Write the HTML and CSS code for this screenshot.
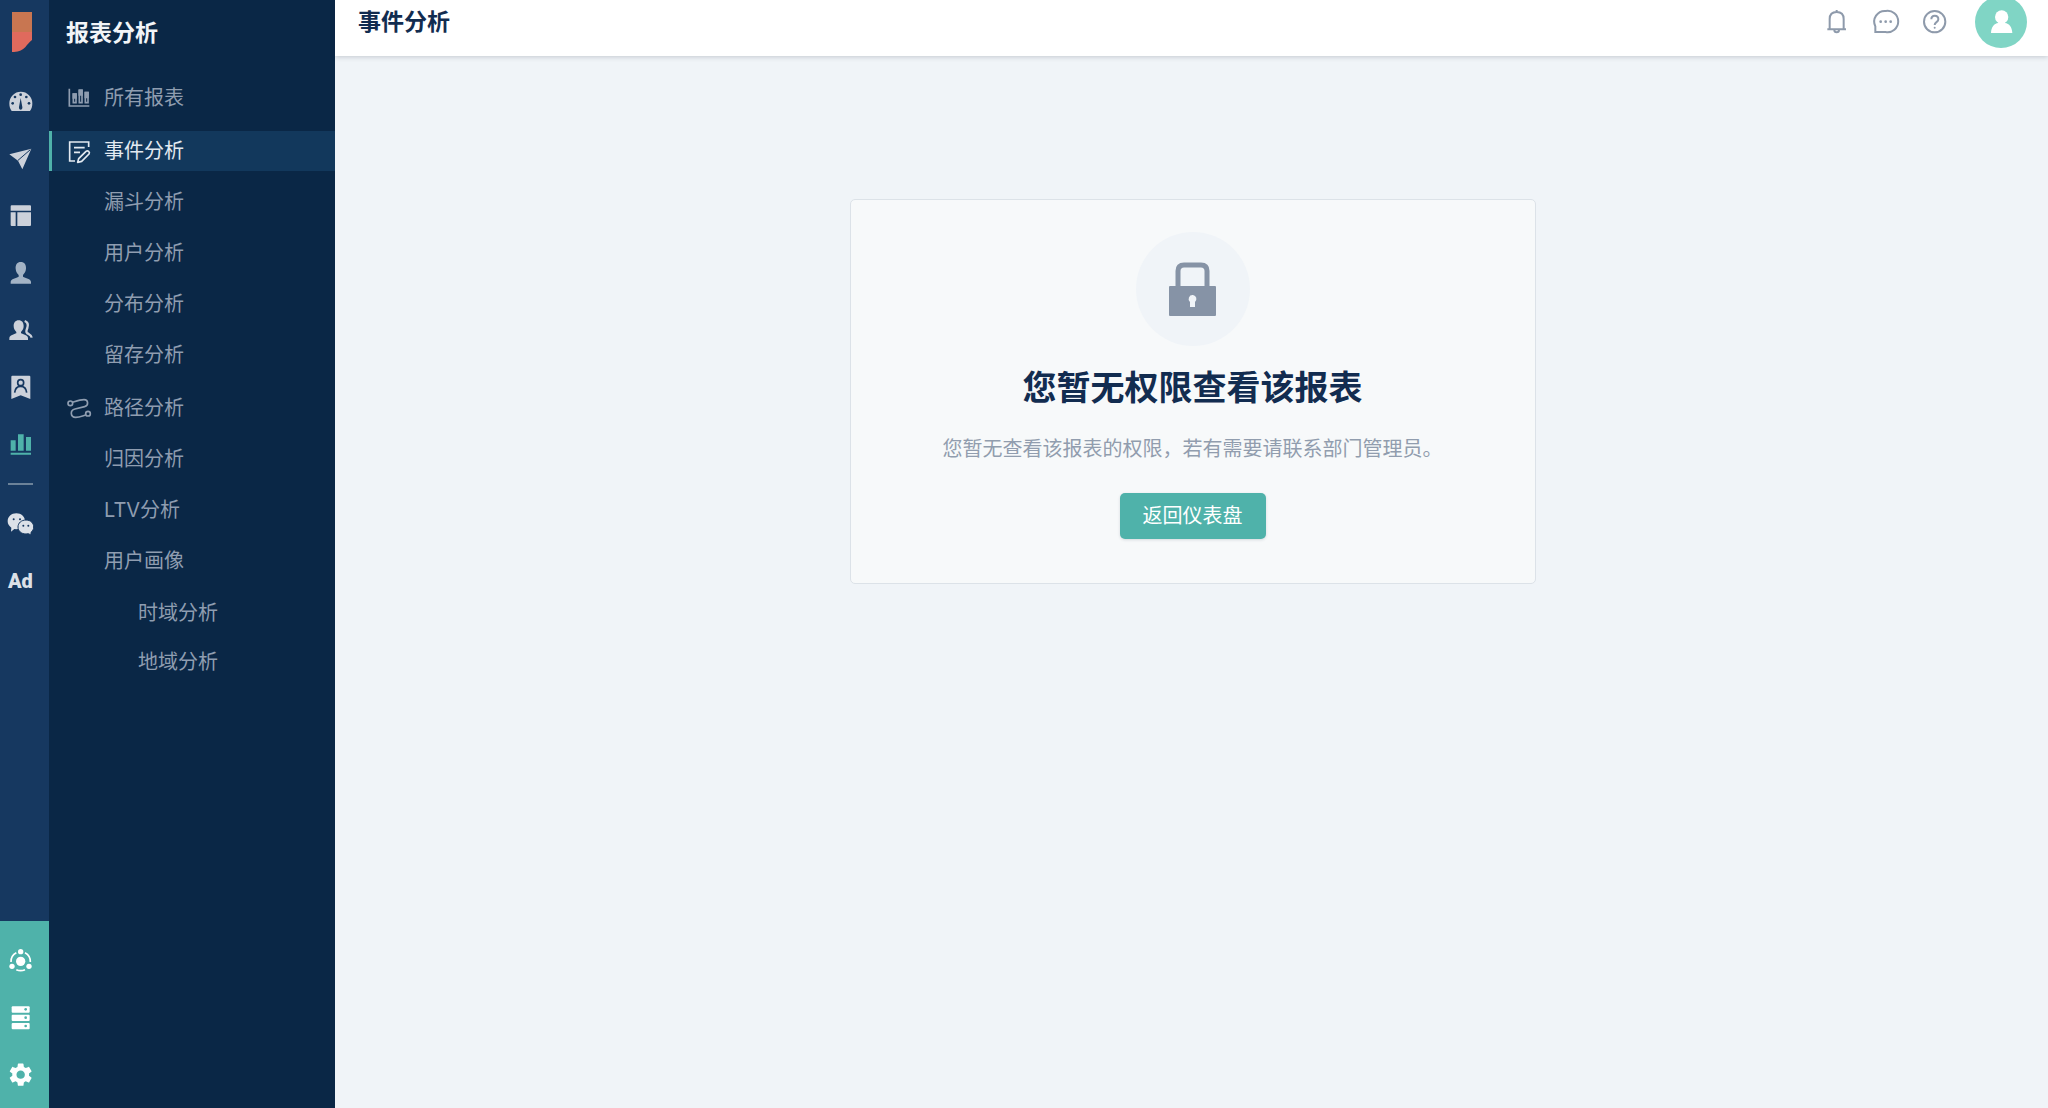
FILE: index.html
```html
<!DOCTYPE html>
<html lang="zh-CN">
<head>
<meta charset="utf-8">
<meta name="viewport" content="width=device-width, initial-scale=1">
<title>事件分析</title>
<link rel="stylesheet" href="styles.css">
</head>
<body>
<div class="app">
  <div class="rail">
    <a class="logo" href="#" aria-label="首页">
      <svg viewBox="0 0 20 40"><path fill="#c87651" d="M0 0h20v21H0z"/><path fill="#e06a5d" d="M0 20h20v8C15 31 13 40 2 40H0z"/></svg>
    </a>
    <nav class="rail-group" aria-label="主导航">
      <a class="rail-link" href="#" aria-label="仪表盘">
        <svg class="icon" viewBox="0 0 75 75"><path fill="currentColor" d="M11 66C6 60 4 52 4 43a34.500 34.500 0 0 1 69 0c0 9-2 17-7 23z"/><g class="cut"><circle cx="14" cy="43" r="4"/><circle cx="21" cy="24" r="4"/><circle cx="38" cy="17" r="4"/><circle cx="55" cy="24" r="4"/><circle cx="63" cy="43" r="4"/><path d="M38 27l5 27c1 5-2 8-5 8s-6-3-5-8z"/></g></svg>
      </a>
      <a class="rail-link" href="#" aria-label="推送">
        <svg class="icon" viewBox="0 0 75 75"><path fill="currentColor" d="M4 25 70 8 43 70 30 44z"/><path class="cut-line" stroke-width="3" d="M67 11 30 43"/></svg>
      </a>
      <a class="rail-link" href="#" aria-label="页面">
        <svg class="icon" viewBox="0 0 75 75" fill="currentColor"><path d="M11 7h55q3 0 3 3v13H8V10q0-3 3-3zM8 28h15v41H11q-3 0-3-3zM28 28h41v38q0 3-3 3H28z"/></svg>
      </a>
      <a class="rail-link rail-link-muted" href="#" aria-label="用户">
        <svg class="icon" viewBox="0 0 75 75" fill="currentColor"><path d="M38 6c11 0 17 8 16 20-1 10-5 14-9 19v5c7 4 24 6 24 16v5H8v-5c0-10 17-12 24-16v-5c-5-5-8-9-9-19C22 14 28 6 38 6z"/></svg>
      </a>
      <a class="rail-link" href="#" aria-label="用户群">
        <svg class="icon" viewBox="0 0 75 75"><path fill="currentColor" d="M32 10c10 0 15 7 15 17 0 9-4 13-8 18v4c6 3 21 5 21 15v5H4v-5c0-10 15-12 21-15v-4c-4-5-8-9-8-18 0-10 5-17 15-17z"/><path fill="none" stroke="currentColor" stroke-width="7" d="M50 12c9 3 11 12 8 21-3 7-5 11-1 15 5 4 13 5 14 14"/></svg>
      </a>
      <a class="rail-link" href="#" aria-label="标签">
        <svg class="icon" viewBox="0 0 75 75"><path fill="currentColor" d="M13 5h51q3 0 3 3v67L38 64 10 75V8q0-3 3-3z"/><circle class="cut-line" stroke-width="5" cx="38" cy="26" r="9"/><path class="cut-line" stroke-width="5" d="M20 56c1-12 8-19 18-19s17 7 18 19"/></svg>
      </a>
      <a class="rail-link rail-link-active" href="#" aria-label="报表分析" aria-current="page">
        <svg class="icon" viewBox="0 0 75 75" fill="currentColor"><path d="M8 28h15v31H8zM30 10h17v49H30zM54 18h15v41H54zM8 65h61v6H8z"/></svg>
      </a>
    </nav>
    <hr class="rail-divider">
    <nav class="rail-group" aria-label="渠道">
      <a class="rail-link rail-link-bright" href="#" aria-label="微信">
        <svg class="icon" viewBox="0 0 75 75"><path fill="currentColor" d="M25 4c15 0 26 10 26 24S40 52 25 52l-6-1-10 8 1-12C3 42-1 36-1 28-1 14 10 4 25 4z"/><path fill="currentColor" stroke="#163860" stroke-width="3" d="M54 24c14 0 23 9 23 21 0 7-3 12-8 16v8l-8-4-7 1c-14 0-24-9-24-21s10-21 24-21z"/><g class="cut"><circle cx="17" cy="22" r="3"/><circle cx="36" cy="22" r="3"/><circle cx="46" cy="41" r="3"/><circle cx="61" cy="41" r="3"/></g></svg>
      </a>
      <a class="rail-link rail-link-bright rail-ad" href="#">Ad</a>
    </nav>
    <nav class="rail-group rail-bottom" aria-label="系统">
      <a class="rail-link" href="#" aria-label="关联">
        <svg class="icon" viewBox="0 0 75 75" fill="currentColor"><circle cx="38" cy="37" r="14"/><circle cx="38" cy="8" r="8"/><circle cx="12" cy="52" r="8"/><circle cx="63" cy="52" r="8"/><path fill="none" stroke="currentColor" stroke-width="5" d="M9 39a30 30 0 0 1 16-28M51 11a30 30 0 0 1 16 28M25 62a30 30 0 0 0 26 0"/></svg>
      </a>
      <a class="rail-link" href="#" aria-label="数据">
        <svg class="icon" viewBox="0 0 75 75"><g fill="currentColor"><rect x="11" y="1" width="54" height="19" rx="3"/><rect x="11" y="26" width="54" height="19" rx="3"/><rect x="11" y="51" width="54" height="19" rx="3"/></g><g fill="#4fb2aa"><circle cx="53" cy="10" r="4"/><circle cx="53" cy="35" r="4"/><circle cx="53" cy="60" r="4"/></g></svg>
      </a>
      <a class="rail-link" href="#" aria-label="设置">
        <svg class="icon" viewBox="0 0 75 75" fill="currentColor"><path transform="translate(-4 -7) scale(3.5)" d="M19.140 12.940c.04-.3.06-.61.06-.94 0-.32-.02-.64-.07-.94l2.030-1.580c.18-.14.23-.41.12-.61l-1.920-3.320c-.12-.22-.37-.29-.59-.22l-2.390.96c-.5-.38-1.030-.7-1.620-.94l-.36-2.540c-.04-.24-.24-.41-.48-.41h-3.840c-.24 0-.43.17-.47.41l-.36 2.540c-.59.24-1.130.57-1.620.94l-2.390-.96c-.22-.08-.47 0-.59.22L2.740 8.870c-.12.21-.08.47.12.61l2.030 1.580c-.05.3-.09.63-.09.94s.02.64.07.94l-2.030 1.580c-.18.14-.23.41-.12.61l1.920 3.320c.12.22.37.29.59.22l2.390-.96c.5.38 1.030.7 1.620.94l.36 2.540c.05.24.24.41.48.41h3.840c.24 0 .44-.17.47-.41l.36-2.540c.59-.24 1.130-.56 1.620-.94l2.390.96c.22.08.47 0 .59-.22l1.920-3.320c.12-.22.07-.47-.12-.61l-2.010-1.580zM12 15.600c-1.980 0-3.600-1.620-3.600-3.600s1.620-3.600 3.600-3.600 3.600 1.620 3.600 3.600-1.620 3.600-3.600 3.600z"/></svg>
      </a>
    </nav>
  </div>

  <aside class="sidebar">
    <h2 class="sidebar-title">报表分析</h2>
    <nav class="menu" aria-label="报表分析">
      <ul class="menu-group">
        <li><a class="menu-item" href="#"><svg class="icon menu-icon" viewBox="0 0 75 75" fill="none" stroke="currentColor" stroke-width="5"><path d="M7 8v52h60"/><path d="M19 24h8v26h-8zM37 14h8v36h-8zM55 20h8v30h-8z"/><path d="M19 24h8v12h-8zM37 12h8v15h-8zM55 20h8v14h-8z" fill="currentColor"/></svg>所有报表</a></li>
      </ul>
      <ul class="menu-group">
        <li><a class="menu-item menu-item-active" href="#" aria-current="page"><svg class="icon menu-icon" viewBox="0 0 75 75" fill="none" stroke="currentColor" stroke-width="5"><path d="M65 24V9H8v57h16M21 26h32M21 40h18"/><path stroke-linejoin="round" d="M32 70l3-11 22-22q4-3 8 0t1 8L44 67z"/></svg>事件分析</a></li>
        <li><a class="menu-item" href="#"><span class="menu-icon"></span>漏斗分析</a></li>
        <li><a class="menu-item" href="#"><span class="menu-icon"></span>用户分析</a></li>
        <li><a class="menu-item" href="#"><span class="menu-icon"></span>分布分析</a></li>
        <li><a class="menu-item" href="#"><span class="menu-icon"></span>留存分析</a></li>
      </ul>
      <ul class="menu-group">
        <li><a class="menu-item" href="#"><svg class="icon menu-icon" viewBox="0 0 75 75" fill="none" stroke="currentColor" stroke-width="5"><circle cx="10" cy="22" r="7"/><circle cx="63" cy="53" r="7"/><path d="M17 19c12-4 22-8 34-8 14 0 14 18 2 21L24 39c-16 4-14 25 2 25 11 0 20-4 30-7"/></svg>路径分析</a></li>
        <li><a class="menu-item" href="#"><span class="menu-icon"></span>归因分析</a></li>
        <li><a class="menu-item" href="#"><span class="menu-icon"></span>LTV分析</a></li>
        <li><a class="menu-item" href="#"><span class="menu-icon"></span>用户画像</a>
          <ul class="submenu">
            <li><a class="menu-item" href="#">时域分析</a></li>
            <li><a class="menu-item" href="#">地域分析</a></li>
          </ul>
        </li>
      </ul>
    </nav>
  </aside>

  <div class="page">
    <header class="topbar">
      <h1 class="topbar-title">事件分析</h1>
      <div class="topbar-tools">
        <button class="tool" type="button" aria-label="通知"><svg class="icon" viewBox="0 0 75 75" fill="none" stroke="currentColor" stroke-width="6"><path d="M38 3v7M10 61h56M17 61V30c0-13 8-21 21-21s21 8 21 21v31M31 63c0 9 14 9 14 0"/></svg></button>
        <button class="tool" type="button" aria-label="消息"><svg class="icon" viewBox="0 0 75 75" fill="none" stroke="currentColor" stroke-width="6"><path d="M38 6a32 32 0 1 1 0 63H7V52a32 32 0 0 1 31-46z"/><g fill="currentColor" stroke="none"><circle cx="23" cy="38" r="4"/><circle cx="38" cy="38" r="4"/><circle cx="53" cy="38" r="4"/></g></svg></button>
        <button class="tool" type="button" aria-label="帮助"><svg class="icon" viewBox="0 0 75 75" fill="none" stroke="currentColor" stroke-width="6"><circle cx="38" cy="38" r="32"/><path d="M28 31c0-14 21-14 21 0 0 9-11 8-11 17"/><circle cx="38" cy="56" r="3" fill="currentColor" stroke="none"/></svg></button>
        <button class="avatar" type="button" aria-label="账户"><svg class="icon" viewBox="0 0 75 75" fill="#fff"><circle cx="38" cy="24" r="20"/><path d="M28 34h20v8c13 2 21 12 22 30H6c1-18 9-28 22-30z"/></svg></button>
      </div>
    </header>
    <main class="content">
      <section class="notice">
        <div class="notice-badge">
          <svg class="lock" viewBox="0 0 48 54"><path fill="none" stroke="#8693a6" stroke-width="5" d="M9 25V9q0-6 6-6h17q6 0 6 6v16"/><path fill="#8693a6" fill-rule="evenodd" d="M1 24h45q1 0 1 1v28q0 1-1 1H1q-1 0-1-1V25q0-1 1-1zm23 9a4 4 0 0 0-3 7v5h5v-5a4 4 0 0 0-2-7z"/></svg>
        </div>
        <h2 class="notice-title">您暂无权限查看该报表</h2>
        <p class="notice-text">您暂无查看该报表的权限，若有需要请联系部门管理员。</p>
        <button class="notice-button" type="button">返回仪表盘</button>
      </section>
    </main>
  </div>
</div>
</body>
</html>
```
FILE: styles.css
```css
* {
  box-sizing: border-box;
}

body,
h1,
h2,
p,
ul {
  margin: 0;
  padding: 0;
}

body {
  font-family: Inter, "Noto Sans CJK SC", sans-serif;
  font-size: 20px;
  line-height: 30px;
  color: #122c50;
  background: #f0f4f8;
}

ul {
  list-style: none;
}

a {
  color: inherit;
  text-decoration: none;
}

button {
  padding: 0;
  border: 0;
  font: inherit;
  color: inherit;
  background: none;
  cursor: pointer;
}

.icon {
  display: block;
  flex: none;
  width: 25px;
  height: 25px;
  overflow: visible;
}

.app {
  display: flex;
  min-height: 100vh;
}

/* Icon rail */

.rail {
  display: flex;
  flex: none;
  flex-direction: column;
  width: 49px;
  padding-top: 12px;
  color: #ccd1da;
  background: #163860;
}

.logo {
  margin: 0 0 37px 12px;
}

.logo svg {
  display: block;
  width: 20px;
  height: 40px;
}

.rail-group {
  display: flex;
  flex-direction: column;
  gap: 32px;
  padding-left: 8px;
}

.rail-link {
  display: flex;
  height: 25px;
}

.rail-link-muted {
  color: #a3b3c5;
}

.rail-link-active {
  color: #4fb2aa;
}

.rail-link-bright {
  color: #dce1e8;
}

.rail-ad {
  font: 900 20px/25px Roboto, sans-serif;
}

.cut {
  fill: #163860;
}

.cut-line {
  fill: none;
  stroke: #163860;
}

.rail-divider {
  width: 25px;
  height: 2px;
  margin: 27px 0 27px 8px;
  border: 0;
  background: #6b8299;
}

.rail-bottom {
  margin-top: auto;
  padding-top: 28px;
  padding-bottom: 20px;
  color: #fff;
  background: #4fb2aa;
}

/* Report menu */

.sidebar {
  flex: none;
  width: 286px;
  padding-top: 18px;
  color: #8f9db0;
  background: #0a2746;
}

.sidebar-title {
  margin-bottom: 30px;
  padding-left: 17px;
  font-size: 23px;
  font-weight: 700;
  color: #f2f5f8;
}

.menu {
  display: flex;
  flex-direction: column;
  gap: 13px;
}

.menu-group {
  display: flex;
  flex-direction: column;
  gap: 11px;
}

.menu-item {
  display: flex;
  align-items: center;
  gap: 12px;
  height: 40px;
  padding-left: 15px;
  border-left: 3px solid transparent;
}

.menu-item-active {
  border-left-color: #4fb2aa;
  color: #e3eaf1;
  background: #12385c;
}

.menu-icon {
  width: 25px;
}

.submenu {
  display: flex;
  flex-direction: column;
  gap: 9px;
  padding-top: 12px;
}

.submenu .menu-item {
  padding-left: 86px;
}

/* Main area */

.page {
  display: flex;
  flex: 1;
  flex-direction: column;
  min-width: 0;
}

.topbar {
  display: flex;
  align-items: center;
  justify-content: space-between;
  height: 56px;
  padding: 0 21px 13px 23px;
  background: #fff;
  box-shadow: 0 1px 5px rgba(20, 30, 50, 0.2);
}

.topbar-title {
  font-size: 23px;
  font-weight: 700;
}

.topbar-tools {
  display: flex;
  align-items: center;
  gap: 24px;
  height: 43px;
  color: #8e9aab;
}

.avatar {
  display: flex;
  flex: none;
  align-items: center;
  justify-content: center;
  width: 52px;
  height: 52px;
  margin-left: 4px;
  border-radius: 50%;
  background: #80d5c5;
}

.content {
  display: flex;
  flex: 1;
  align-items: flex-start;
  justify-content: center;
  padding: 143px 24px 40px 26px;
}

.notice {
  display: flex;
  flex-direction: column;
  align-items: center;
  width: 686px;
  padding: 32px 24px 44px;
  border: 1px solid #dce2e8;
  border-radius: 5px;
  background: #f7f9fa;
}

.notice-badge {
  display: flex;
  align-items: center;
  justify-content: center;
  width: 114px;
  height: 114px;
  margin-bottom: 17px;
  border-radius: 50%;
  background: #f0f4f8;
}

.lock {
  width: 48px;
  height: 54px;
}

.notice-title {
  margin-bottom: 21px;
  font-size: 34px;
  font-weight: 700;
  line-height: 50px;
}

.notice-text {
  margin-bottom: 29px;
  color: #919dae;
}

.notice-button {
  padding: 8px 23px;
  border-radius: 5px;
  color: #fff;
  background: #4fb2aa;
  box-shadow: 0 1px 3px rgba(20, 40, 60, 0.15);
}
```
